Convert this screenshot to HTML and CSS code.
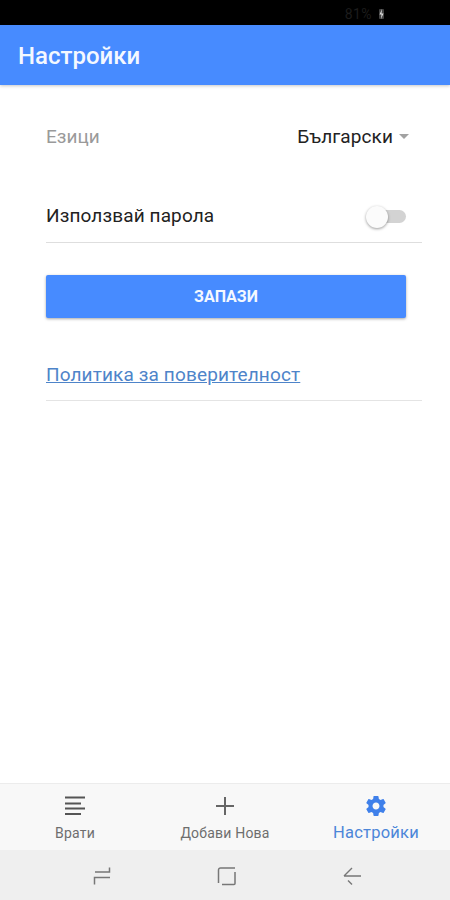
FILE: index.html
```html
<!DOCTYPE html>
<html lang="bg">
<head>
<meta charset="utf-8">
<title>Настройки</title>
<link rel="stylesheet" href="styles.css">
</head>
<body>
<div class="phone">
  <div class="status">
    <span class="battery-text">81%</span>
    <svg class="bolt" width="7" height="12" viewBox="0 0 7 12"><rect x="1" y="1" width="5" height="10" rx="1" fill="#444"/><path d="M4 1 1.500 6.500h2L3 11l2.500-5.500h-2z" fill="#ddd"/></svg>
  </div>
  <header class="appbar"><h1 class="title">Настройки</h1></header>
  <main class="content">
    <div class="lang-row">
      <span class="lang-label">Езици</span>
      <span class="lang-value">Български<span class="caret"></span></span>
    </div>
    <div class="pass-row">
      <span class="pass-label">Използвай парола</span>
      <span class="switch"><span class="track"></span><span class="thumb"></span></span>
    </div>
    <button class="save" type="button">ЗАПАЗИ</button>
    <div class="policy-row"><a class="policy" href="#">Политика за поверителност</a></div>
  </main>
  <nav class="tabs">
    <div class="tab">
      <svg class="tab-icon" width="24" height="24" viewBox="0 0 24 24"><path d="M2 3.500h20M2 9.500h16M2 14.500h20M2 20h16" stroke="#555" stroke-width="2" fill="none"/></svg>
      <span class="tab-label">Врати</span>
    </div>
    <div class="tab">
      <svg class="tab-icon" width="24" height="24" viewBox="0 0 24 24"><path d="M12 3v18M3 12h18" stroke="#666" stroke-width="2" fill="none"/></svg>
      <span class="tab-label">Добави Нова</span>
    </div>
    <div class="tab tab-active">
      <svg class="tab-icon" width="26" height="26" viewBox="0 0 24 24"><path fill="#3f80ea" d="M19.430 12.980c.04-.32.07-.64.07-.98s-.03-.66-.07-.98l2.110-1.650c.19-.15.240-.42.120-.64l-2-3.460c-.12-.22-.39-.3-.61-.22l-2.490 1c-.52-.4-1.080-.73-1.690-.98l-.38-2.650A.488.488 0 0 0 14 2h-4c-.25 0-.46.180-.49.420l-.38 2.650c-.61.25-1.170.59-1.690.98l-2.490-1c-.23-.09-.49 0-.61.220l-2 3.460c-.13.220-.07.490.12.640l2.110 1.650c-.04.32-.07.650-.07.980s.03.660.07.980l-2.110 1.650c-.19.150-.24.420-.12.640l2 3.460c.12.220.39.300.61.220l2.490-1c.52.400 1.080.730 1.690.980l.38 2.650c.03.240.24.420.49.420h4c.25 0 .46-.180.49-.420l.38-2.650c.61-.250 1.170-.590 1.690-.980l2.490 1c.23.090.49 0 .61-.220l2-3.460c.12-.220.07-.490-.12-.640l-2.110-1.650zM12 15.500c-1.930 0-3.500-1.570-3.500-3.500s1.570-3.500 3.500-3.500 3.500 1.570 3.500 3.500-1.570 3.500-3.500 3.500z"/></svg>
      <span class="tab-label">Настройки</span>
    </div>
  </nav>
  <div class="sysnav">
    <svg width="20" height="20" viewBox="0 0 20 20"><path d="M17.500 1.500v4.500H3M18 11.500H2.500v7" stroke="#777" stroke-width="1.500" fill="none"/></svg>
    <svg width="20" height="20" viewBox="0 0 20 20"><path d="M1.500 17V4a2 2 0 0 1 2-2h14.500M18 6v11.500a1 1 0 0 1-1 1H5" stroke="#777" stroke-width="1.500" fill="none"/></svg>
    <svg width="20" height="20" viewBox="0 0 20 20"><path d="M19 10H2M10 2 2 10M6 14.500l4 4" stroke="#777" stroke-width="1.400" fill="none"/></svg>
  </div>
</div>
</body>
</html>
```
FILE: styles.css
```css
* { box-sizing: border-box; }
html, body { margin: 0; padding: 0; }
body { background: #fff; font-family: Roboto, "Noto Sans", sans-serif; }
.phone { width: 450px; height: 900px; display: flex; flex-direction: column; overflow: hidden; background: #fff; }
.status { height: 25px; flex: none; background: #000; display: flex; align-items: center; justify-content: flex-end; gap: 3px; padding: 3px 65px 0 0; }
.battery-text { color: #1c1c1c; font-size: 14px; line-height: 15px; letter-spacing: .4px; margin-right: 3px; }
.appbar { height: 60px; flex: none; background: #478bff; display: flex; align-items: center; padding: 0 18px; box-shadow: 0 1px 3px rgba(0,0,0,.22); position: relative; }
.title { margin: 2px 0 0; color: #f4f8ff; font-size: 24px; font-weight: 500; line-height: 28px; }
.content { flex: 1; padding: 0 28px 0 46px; }
.lang-row { display: flex; justify-content: space-between; align-items: center; height: 24px; margin-top: 40px; padding-right: 13px; }
.lang-label { color: #9a9a9a; font-size: 19px; line-height: 24px; }
.lang-value { color: #222; font-size: 19px; line-height: 24px; letter-spacing: .1px; display: flex; align-items: center; gap: 6px; }
.caret { width: 0; height: 0; border-left: 5.500px solid transparent; border-right: 5.500px solid transparent; border-top: 5px solid #a2a2a2; margin-top: -2px; }
.pass-row { display: flex; justify-content: space-between; align-items: center; height: 67px; margin-top: 27px; padding: 13px 16px 0 0; border-bottom: 1px solid #dedede; }
.pass-label { color: #222; font-size: 19px; line-height: 24px; letter-spacing: .12px; }
.switch { width: 41px; height: 20px; display: flex; align-items: center; position: relative; top: 1px; }
.track { width: 38px; height: 13px; margin-left: 3px; border-radius: 7px; background: #d3d3d3; }
.thumb { position: absolute; left: 1px; top: -1px; width: 22px; height: 22px; border-radius: 50%; background: #fbfbfb; box-shadow: 0 1px 3px rgba(0,0,0,.4); }
.save { display: block; width: 360px; height: 43px; margin-top: 32px; border: 0; border-radius: 2px; background: #478bff; color: #f4f8ff; font: 700 16px/20px Roboto, sans-serif; box-shadow: 0 1px 3px rgba(0,0,0,.35); padding: 0; }
.policy-row { margin-top: 31px; height: 52px; padding-top: 14px; border-bottom: 1px solid #e4e4e4; }
.policy { color: #4e84c9; font-size: 19px; line-height: 24px; letter-spacing: .13px; text-decoration: underline; }
.tabs { height: 67px; flex: none; background: #f8f8f8; border-top: 1px solid #ececec; display: grid; grid-template-columns: 150px 150px 150px; }
.tab { display: flex; flex-direction: column; align-items: center; color: #6e6e6e; padding-top: 10px; }
.tab-icon { display: block; height: 24px; margin-bottom: 6px; }
.tab-label { font-size: 14px; line-height: 18px; letter-spacing: .2px; }
.tab-active { color: #4c86d8; padding-left: 2px; }
.tab-active .tab-label { font-size: 16.500px; }
.sysnav { height: 50px; flex: none; background: #efefef; display: grid; grid-template-columns: 150px 100px 150px; padding: 1px 25px 0 27px; justify-items: center; align-items: center; }
```
